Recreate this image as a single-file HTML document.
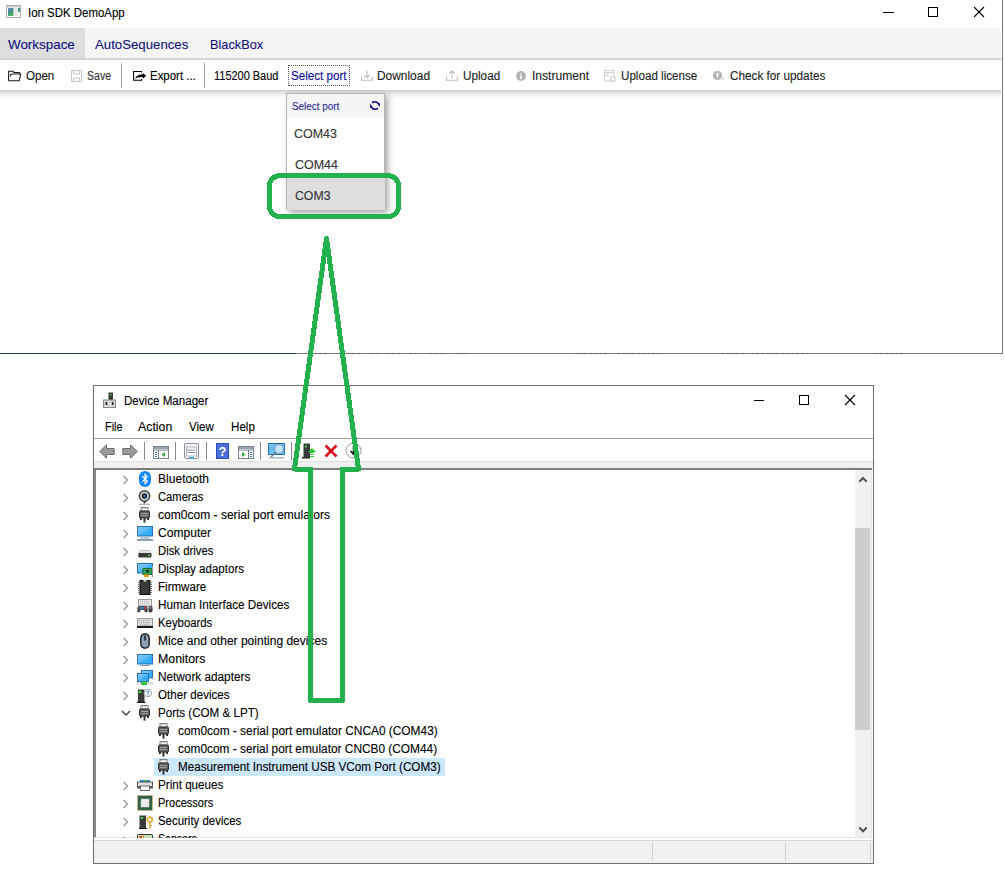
<!DOCTYPE html>
<html><head><meta charset="utf-8"><style>
html,body{margin:0;padding:0;}
body{width:1005px;height:871px;position:relative;overflow:hidden;background:#fff;font-family:"Liberation Sans",sans-serif;}
.t{position:absolute;white-space:nowrap;line-height:normal;transform-origin:0 0;-webkit-text-stroke:0.12px currentColor;}
.r{position:absolute;display:block;}
</style></head><body>
<svg class="r" style="left:6px;top:5px;" width="15" height="13" viewBox="0 0 15 13"><rect x="0.5" y="0.5" width="14" height="12" fill="#fff" stroke="#a9adb2"/><rect x="1" y="1" width="13" height="1.5" fill="#c9cdd2"/><defs><linearGradient id="ig" x1="0" y1="0" x2="0.4" y2="1"><stop offset="0" stop-color="#6a8fc0"/><stop offset="0.5" stop-color="#3d8a8f"/><stop offset="1" stop-color="#52b060"/></linearGradient></defs><rect x="2" y="3" width="5.5" height="8" fill="url(#ig)"/><rect x="8.5" y="3" width="3" height="8" fill="#e3e3e3"/><rect x="12" y="3" width="2" height="4" fill="url(#ig)"/></svg>
<div class="t" style="left:27.80px;top:5.84px;font-size:12px;color:#000;transform:scaleX(0.9538);">Ion SDK DemoApp</div>
<div class="r" style="left:883px;top:12px;width:11px;height:1px;background:#000;"></div>
<div class="r" style="left:928px;top:7px;width:10px;height:10px;background:transparent;border:1px solid #000;box-sizing:border-box;"></div>
<svg class="r" style="left:973px;top:6px;" width="12" height="12" viewBox="0 0 12 12"><path d="M1 1L11 11M11 1L1 11" stroke="#000" stroke-width="1.1"/></svg>
<div class="r" style="left:0px;top:28px;width:1001px;height:30px;background:#f5f5f5;"></div>
<div class="r" style="left:0px;top:28px;width:85px;height:30px;background:#dedede;"></div>
<div class="r" style="left:0px;top:58px;width:1001px;height:2px;background:#d4d4d4;"></div>
<div class="t" style="left:8.40px;top:37.03px;font-size:13px;color:#12127e;transform:scaleX(1.0311);">Workspace</div>
<div class="t" style="left:95.40px;top:37.03px;font-size:13px;color:#12127e;transform:scaleX(1.0164);">AutoSequences</div>
<div class="t" style="left:209.60px;top:37.03px;font-size:13px;color:#12127e;transform:scaleX(0.9818);">BlackBox</div>
<div class="r" style="left:0;top:90px;width:1001px;height:9px;background:linear-gradient(#cacaca,#e4e4e4 30%,#f6f6f6 65%,#fff);"></div>
<div class="r" style="left:121px;top:63px;width:1px;height:25px;background:#a0a0a0;"></div>
<div class="r" style="left:204px;top:63px;width:1px;height:25px;background:#a0a0a0;"></div>
<svg class="r" style="left:8px;top:70px;" width="14" height="12" viewBox="0 0 14 12"><path d="M0.6 11V1.3H5L6 2.5H11.5V3.9M2.3 6.5Q2.3 3.9 4 3.9H12.7L11.3 10.7H0.6" fill="none" stroke="#1a1a1a" stroke-width="1.05"/></svg>
<div class="t" style="left:26.30px;top:69.14px;font-size:12px;color:#111;transform:scaleX(0.9641);">Open</div>
<svg class="r" style="left:71px;top:70px;" width="11" height="12" viewBox="0 0 11 12"><rect x="0.5" y="0.5" width="10" height="11" fill="none" stroke="#c8c8c8"/><rect x="2.5" y="0.5" width="6" height="3.5" fill="none" stroke="#c8c8c8"/><rect x="2.5" y="8" width="6" height="3.5" fill="none" stroke="#c8c8c8"/></svg>
<div class="t" style="left:87.00px;top:69.14px;font-size:12px;color:#333;transform:scaleX(0.8775);">Save</div>
<svg class="r" style="left:133px;top:70px;" width="14" height="12" viewBox="0 0 14 12"><path d="M8.6 2.4V1.4H0.6V10.3H8.6V9.1" fill="none" stroke="#000" stroke-width="1.05"/><path d="M2.2 9C2.8 6.2 5.5 4.4 9.8 4.2V2.9L13.2 5.8L9.8 8.7V7.1C6.2 6.9 3.8 7.6 2.2 9Z" fill="#000"/></svg>
<div class="t" style="left:150.30px;top:69.14px;font-size:12px;color:#000;transform:scaleX(0.9538);">Export ...</div>
<div class="t" style="left:214.00px;top:69.14px;font-size:12px;color:#000;transform:scaleX(0.9134);">115200 Baud</div>
<div class="r" style="left:288px;top:65px;width:62px;height:21px;background:transparent;border:1px dotted #555;box-sizing:border-box;"></div>
<div class="t" style="left:291.30px;top:69.14px;font-size:12px;color:#0c0c98;transform:scaleX(0.9675);">Select port</div>
<svg class="r" style="left:361px;top:70px;" width="12" height="11" viewBox="0 0 12 11"><path d="M6 0.5V7.5M3.3 5L6 7.7L8.7 5M0.5 6.5V10.3H11.3V6.5" fill="none" stroke="#bdbdbd" stroke-width="1.1"/></svg>
<div class="t" style="left:377.40px;top:69.14px;font-size:12px;color:#222;transform:scaleX(0.9932);">Download</div>
<svg class="r" style="left:446px;top:70px;" width="12" height="11" viewBox="0 0 12 11"><path d="M6 8V1M3.3 3.5L6 0.8L8.7 3.5M0.5 6.5V10.3H11.3V6.5" fill="none" stroke="#bdbdbd" stroke-width="1.1"/></svg>
<div class="t" style="left:462.50px;top:69.14px;font-size:12px;color:#222;transform:scaleX(0.9783);">Upload</div>
<svg class="r" style="left:516px;top:71px;" width="10" height="10" viewBox="0 0 10 10"><circle cx="5" cy="5" r="5" fill="#b3b3b3"/><rect x="4.3" y="4" width="1.5" height="4.2" fill="#fff"/><rect x="4.3" y="2" width="1.5" height="1.3" fill="#fff"/></svg>
<div class="t" style="left:531.70px;top:69.14px;font-size:12px;color:#222;transform:scaleX(1.0072);">Instrument</div>
<svg class="r" style="left:604px;top:70px;" width="12" height="12" viewBox="0 0 12 12"><rect x="0.5" y="0.5" width="9.5" height="10.5" fill="none" stroke="#cfcfcf"/><rect x="1" y="2" width="9" height="1.5" fill="#d8d8d8"/><rect x="1" y="5" width="4" height="1.2" fill="#d0d0d0"/><rect x="6.5" y="7" width="4.5" height="4" fill="#fff" stroke="#c8c8c8"/></svg>
<div class="t" style="left:620.60px;top:69.14px;font-size:12px;color:#222;transform:scaleX(0.9694);">Upload license</div>
<svg class="r" style="left:712px;top:70px;" width="13" height="12" viewBox="0 0 13 12"><circle cx="5.5" cy="5.5" r="4.6" fill="#b5b5b5"/><path d="M5.5 2.5L3.5 4.7H4.8V7.5H6.2V4.7H7.5Z" fill="#fff"/><path d="M9.5 10L12 7.5" stroke="#cfcfcf" stroke-width="1.2"/></svg>
<div class="t" style="left:729.70px;top:69.14px;font-size:12px;color:#222;transform:scaleX(0.9786);">Check for updates</div>
<div class="r" style="left:1002px;top:0px;width:1px;height:354px;background:#7a7a7a;"></div>
<div class="r" style="left:0px;top:353px;width:296px;height:1px;background:#1e3d5c;"></div>
<div class="r" style="left:296px;top:353px;width:707px;height:1px;background:#7a7a7a;"></div>
<div class="r" style="left:286px;top:93px;width:99px;height:117px;background:#fff;border:1px solid #b5b5b5;box-sizing:border-box;box-shadow:3px 3px 6px rgba(0,0,0,0.35);"></div>
<div class="r" style="left:287px;top:94px;width:97px;height:23px;background:#f5f5f5;"></div>
<div class="r" style="left:287px;top:178px;width:98px;height:32px;background:#dedede;"></div>
<div class="t" style="left:292.00px;top:101.15px;font-size:10px;color:#2a2a96;transform:scaleX(0.9895);">Select port</div>
<svg class="r" style="left:369px;top:100px;" width="12" height="11" viewBox="0 0 12 11"><path d="M3 2.8A4.3 4 0 0 1 9 3.2" fill="none" stroke="#0c0c88" stroke-width="1.8"/><path d="M7.6 2.6L11.2 3.6L10.6 7.3Z" fill="#0c0c88"/><path d="M9 8.2A4.3 4 0 0 1 3 7.8" fill="none" stroke="#0c0c88" stroke-width="1.8"/><path d="M4.4 8.4L0.8 7.4L1.4 3.7Z" fill="#0c0c88"/></svg>
<div class="t" style="left:294.30px;top:126.84px;font-size:12px;color:#333;transform:scaleX(1.0401);">COM43</div>
<div class="t" style="left:294.60px;top:157.64px;font-size:12px;color:#333;transform:scaleX(1.0401);">COM44</div>
<div class="t" style="left:294.60px;top:188.74px;font-size:12px;color:#333;transform:scaleX(1.0239);">COM3</div>
<div class="r" style="left:93px;top:385px;width:781px;height:479px;background:#fff;border:1px solid #6f6f6f;box-sizing:border-box;"></div>
<svg class="r" style="left:103px;top:392px;" width="13" height="16" viewBox="0 0 13 16"><rect x="5.5" y="0.5" width="4.5" height="8" fill="#3a3a3a"/><rect x="7" y="2" width="1.5" height="1.5" fill="#3ce03c"/><rect x="0.5" y="8" width="12" height="7.5" fill="#d9d9d9" stroke="#8a8a8a"/><rect x="2.5" y="10" width="1.8" height="3" fill="#222"/><rect x="8.7" y="10" width="1.8" height="3" fill="#222"/><rect x="4.5" y="11" width="4" height="1" fill="#f4f4f4"/></svg>
<div class="t" style="left:123.60px;top:394.14px;font-size:12px;color:#000;transform:scaleX(0.9660);">Device Manager</div>
<div class="r" style="left:754px;top:400px;width:10px;height:1px;background:#000;"></div>
<div class="r" style="left:799px;top:395px;width:10px;height:10px;background:transparent;border:1px solid #000;box-sizing:border-box;"></div>
<svg class="r" style="left:844px;top:394px;" width="12" height="12" viewBox="0 0 12 12"><path d="M1 1L11 11M11 1L1 11" stroke="#000" stroke-width="1.1"/></svg>
<div class="t" style="left:104.50px;top:419.94px;font-size:12px;color:#000;transform:scaleX(0.9051);">File</div>
<div class="t" style="left:138.20px;top:419.94px;font-size:12px;color:#000;transform:scaleX(1.0284);">Action</div>
<div class="t" style="left:189.20px;top:419.94px;font-size:12px;color:#000;transform:scaleX(0.9577);">View</div>
<div class="t" style="left:230.60px;top:419.94px;font-size:12px;color:#000;transform:scaleX(0.9685);">Help</div>
<div class="r" style="left:94px;top:438px;width:779px;height:1px;background:#a0a0a0;"></div>
<div class="r" style="left:94px;top:461px;width:779px;height:7px;background:#f0f0f0;"></div>
<div class="r" style="left:94px;top:461px;width:779px;height:1px;background:#dedede;"></div>
<div class="r" style="left:94px;top:468px;width:778px;height:2px;background:#7c7c7c;"></div>
<svg class="r" style="left:99px;top:444px;" width="16" height="15" viewBox="0 0 16 15"><path d="M0.8 7.5L7.5 0.8V4.5H15.2V10.5H7.5V14.2Z" fill="#9a9a9a" stroke="#6e6e6e" stroke-width="1"/></svg>
<svg class="r" style="left:122px;top:444px;" width="16" height="15" viewBox="0 0 16 15"><path d="M15.2 7.5L8.5 0.8V4.5H0.8V10.5H8.5V14.2Z" fill="#9a9a9a" stroke="#6e6e6e" stroke-width="1"/></svg>
<div class="r" style="left:144px;top:442px;width:1px;height:18px;background:#8a8a8a;"></div>
<div class="r" style="left:175px;top:442px;width:1px;height:18px;background:#8a8a8a;"></div>
<div class="r" style="left:206px;top:442px;width:1px;height:18px;background:#8a8a8a;"></div>
<div class="r" style="left:260px;top:442px;width:1px;height:18px;background:#8a8a8a;"></div>
<div class="r" style="left:291px;top:442px;width:1px;height:18px;background:#8a8a8a;"></div>
<svg class="r" style="left:153px;top:446px;" width="16" height="13" viewBox="0 0 16 13"><rect x="0.5" y="0.5" width="15" height="12" fill="#fff" stroke="#7a8290"/><rect x="1" y="1" width="14" height="2" fill="#9aa3b0"/><rect x="1" y="3.5" width="14" height="1" fill="#7a8290"/><rect x="5" y="4" width="1" height="8.5" fill="#7a8290"/><rect x="2" y="6" width="2" height="1" fill="#3a78c8"/><rect x="2" y="8" width="2" height="1" fill="#3a78c8"/><rect x="2" y="10" width="2" height="1" fill="#3a78c8"/><path d="M12 6L8.5 8.5L12 11Z" fill="#2ea43a"/></svg>
<svg class="r" style="left:184px;top:443px;" width="15" height="16" viewBox="0 0 15 16"><rect x="0.5" y="0.5" width="14" height="15" rx="1.5" fill="#f4f4f4" stroke="#8a8f98"/><rect x="2.5" y="4" width="10" height="9" fill="#fff" stroke="#aab0b8"/><rect x="4" y="6.5" width="7" height="1" fill="#8090a0"/><rect x="4" y="9" width="7" height="1" fill="#8090a0"/><rect x="3" y="6.5" width="1" height="1" fill="#2a9ae0"/><rect x="5" y="14" width="5" height="1.5" fill="#2ab0f0"/></svg>
<svg class="r" style="left:216px;top:443px;" width="13" height="16" viewBox="0 0 13 16"><rect x="0" y="0" width="13" height="16" fill="#2b4fb8"/><rect x="1" y="1" width="11" height="14" fill="#4a6fd8"/><text x="6.5" y="13" font-size="13" font-weight="bold" text-anchor="middle" fill="#fff" font-family="Liberation Sans">?</text></svg>
<svg class="r" style="left:238px;top:446px;" width="16" height="13" viewBox="0 0 16 13"><rect x="0.5" y="0.5" width="15" height="12" fill="#fff" stroke="#7a8290"/><rect x="1" y="1" width="14" height="2" fill="#9aa3b0"/><rect x="1" y="3.5" width="14" height="1" fill="#7a8290"/><rect x="10" y="4" width="1" height="8.5" fill="#7a8290"/><rect x="12" y="6" width="2" height="1" fill="#3a78c8"/><rect x="12" y="8" width="2" height="1" fill="#3a78c8"/><rect x="12" y="10" width="2" height="1" fill="#3a78c8"/><path d="M4 6L7.5 8.5L4 11Z" fill="#2ea43a"/></svg>
<svg class="r" style="left:268px;top:443px;" width="18" height="16" viewBox="0 0 18 16"><rect x="0.5" y="0.5" width="16" height="11" fill="#6ec0f0" stroke="#2a70b0"/><circle cx="11" cy="6" r="4.5" fill="#bfe6fa" stroke="#7a9ab0"/><path d="M8 9L3 14" stroke="#6a7a8a" stroke-width="1.5"/><rect x="1" y="14" width="15" height="1.5" fill="#a8b8c8"/></svg>
<svg class="r" style="left:302px;top:443px;" width="14" height="16" viewBox="0 0 14 16"><rect x="1.5" y="0.5" width="6.5" height="14" fill="#3a3a3a"/><rect x="3" y="2.5" width="2" height="2" fill="#3ce03c"/><rect x="0" y="14" width="8" height="1.5" fill="#222"/><path d="M10 5L14 9H11.8V10H8.2V9H6Z" fill="#2ec22e"/><rect x="8.2" y="11" width="3.6" height="1" fill="#2ec22e"/><rect x="8.2" y="13" width="3.6" height="1" fill="#2ec22e"/></svg>
<svg class="r" style="left:324px;top:444px;" width="14" height="14" viewBox="0 0 14 14"><path d="M1.5 1.5L12.5 12.5M12.5 1.5L1.5 12.5" stroke="#e0061e" stroke-width="2.6"/></svg>
<svg class="r" style="left:345px;top:442px;" width="17" height="17" viewBox="0 0 17 17"><circle cx="8.5" cy="8.5" r="7.5" fill="#fff" stroke="#9a9a9a"/><path d="M8.5 4V11M5.5 9L8.5 12L11.5 9" fill="none" stroke="#111" stroke-width="1.6"/></svg>
<div class="r" style="left:94px;top:470px;width:2px;height:369px;background:#888;"></div>
<div class="r" style="left:855px;top:470px;width:16px;height:367px;background:#f0f0f0;"></div>
<div class="r" style="left:855px;top:528px;width:15px;height:202px;background:#cdcdcd;"></div>
<div class="r" style="left:871px;top:470px;width:1px;height:368px;background:#e6e6e6;"></div>
<svg class="r" style="left:858px;top:474px;" width="10" height="10" viewBox="0 0 10 10"><path d="M1.3 7.8L5 4.1L8.7 7.8" fill="none" stroke="#555" stroke-width="2.1"/></svg>
<svg class="r" style="left:858px;top:824px;" width="10" height="10" viewBox="0 0 10 10"><path d="M1.3 3.6L5 7.3L8.7 3.6" fill="none" stroke="#555" stroke-width="2.1"/></svg>
<div class="r" style="left:94px;top:837px;width:777px;height:1px;background:#e3e3e3;"></div>
<div class="r" style="left:94px;top:838px;width:779px;height:2px;background:#fdfdfd;"></div>
<div class="r" style="left:94px;top:840px;width:779px;height:1px;background:#d7d7d7;"></div>
<div class="r" style="left:94px;top:841px;width:779px;height:22px;background:#f0f0f0;"></div>
<div class="r" style="left:652px;top:842px;width:1px;height:19px;background:#d0d0d0;"></div>
<div class="r" style="left:785px;top:842px;width:1px;height:19px;background:#d0d0d0;"></div>
<div class="r" style="left:870px;top:842px;width:1px;height:19px;background:#d0d0d0;"></div>
<svg class="r" style="left:122px;top:475px;" width="8" height="10" viewBox="0 0 8 10"><path d="M1.5 1L5.5 5L1.5 9" fill="none" stroke="#a0a0a0" stroke-width="1.5"/></svg>
<svg class="r" style="left:139px;top:471px;" width="12" height="16" viewBox="0 0 12 16"><rect x="0" y="0" width="12" height="16" rx="6" fill="#1089ff"/><path d="M3.2 5.2L8.4 10.3L6 12.7V3.3L8.4 5.7L3.2 10.8" fill="none" stroke="#fff" stroke-width="1.15"/></svg>
<div class="t" style="left:158.40px;top:471.94px;font-size:12px;color:#000;transform:scaleX(1.0058);">Bluetooth</div>
<svg class="r" style="left:122px;top:493px;" width="8" height="10" viewBox="0 0 8 10"><path d="M1.5 1L5.5 5L1.5 9" fill="none" stroke="#a0a0a0" stroke-width="1.5"/></svg>
<svg class="r" style="left:138px;top:490px;" width="13" height="15" viewBox="0 0 13 15"><circle cx="6.5" cy="6" r="5.2" fill="#cfcfcf" stroke="#464646" stroke-width="1.5"/><circle cx="6.5" cy="6" r="2.7" fill="#1b2436"/><circle cx="6.5" cy="6" r="1.1" fill="#3b7fd4"/><rect x="5.5" y="11.3" width="2" height="2.2" fill="#333"/><rect x="1" y="13.8" width="11" height="1" fill="#a0a0a0"/></svg>
<div class="t" style="left:158.40px;top:489.94px;font-size:12px;color:#000;transform:scaleX(0.9326);">Cameras</div>
<svg class="r" style="left:122px;top:511px;" width="8" height="10" viewBox="0 0 8 10"><path d="M1.5 1L5.5 5L1.5 9" fill="none" stroke="#a0a0a0" stroke-width="1.5"/></svg>
<svg class="r" style="left:139px;top:507px;" width="11" height="16" viewBox="0 0 11 16"><rect x="2" y="0.5" width="7" height="3.5" fill="#fff" stroke="#808080"/><path d="M3.2 1.6H8" stroke="#999" stroke-dasharray="0.8 0.8"/><rect x="0.5" y="4" width="10" height="7" rx="1" fill="#5e5e5e" stroke="#333"/><rect x="2" y="6" width="7" height="0.9" fill="#aaa"/><rect x="2" y="8.2" width="7" height="0.9" fill="#aaa"/><rect x="1" y="11" width="1.8" height="2" fill="#222"/><rect x="8.2" y="11" width="1.8" height="2" fill="#222"/><rect x="4.5" y="11" width="2" height="4.6" fill="#333"/></svg>
<div class="t" style="left:158.40px;top:507.94px;font-size:12px;color:#000;transform:scaleX(1.0036);">com0com - serial port emulators</div>
<svg class="r" style="left:122px;top:529px;" width="8" height="10" viewBox="0 0 8 10"><path d="M1.5 1L5.5 5L1.5 9" fill="none" stroke="#a0a0a0" stroke-width="1.5"/></svg>
<svg class="r" style="left:137px;top:526px;" width="16" height="15" viewBox="0 0 16 15"><defs><linearGradient id="scr" x1="0" y1="0" x2="1" y2="1"><stop offset="0" stop-color="#86cdfb"/><stop offset="0.5" stop-color="#5cbaf8"/><stop offset="0.51" stop-color="#3eaef6"/><stop offset="1" stop-color="#2ea8f4"/></linearGradient></defs><rect x="0.5" y="0.5" width="15" height="9.5" fill="url(#scr)" stroke="#2a72b0"/><rect x="6.5" y="10.5" width="3" height="1" fill="#b8c4d0"/><rect x="3.5" y="11.5" width="9" height="1" fill="#7d90a8"/><rect x="0" y="13" width="16" height="2" fill="#8ea0b5"/></svg>
<div class="t" style="left:158.40px;top:525.94px;font-size:12px;color:#000;transform:scaleX(1.0059);">Computer</div>
<svg class="r" style="left:122px;top:547px;" width="8" height="10" viewBox="0 0 8 10"><path d="M1.5 1L5.5 5L1.5 9" fill="none" stroke="#a0a0a0" stroke-width="1.5"/></svg>
<svg class="r" style="left:138px;top:550px;" width="14" height="8" viewBox="0 0 14 8"><path d="M2 0.5H11.5L13 3.2H0.8Z" fill="#ececec" stroke="#c4c4c4"/><rect x="0.3" y="3" width="13.2" height="4.5" rx="1" fill="#383838"/><rect x="10.3" y="4.5" width="1.6" height="1.6" fill="#45e045"/></svg>
<div class="t" style="left:158.40px;top:543.94px;font-size:12px;color:#000;transform:scaleX(0.9442);">Disk drives</div>
<svg class="r" style="left:122px;top:565px;" width="8" height="10" viewBox="0 0 8 10"><path d="M1.5 1L5.5 5L1.5 9" fill="none" stroke="#a0a0a0" stroke-width="1.5"/></svg>
<svg class="r" style="left:137px;top:563px;" width="16" height="14" viewBox="0 0 16 14"><defs><linearGradient id="scr" x1="0" y1="0" x2="1" y2="1"><stop offset="0" stop-color="#86cdfb"/><stop offset="0.5" stop-color="#5cbaf8"/><stop offset="0.51" stop-color="#3eaef6"/><stop offset="1" stop-color="#2ea8f4"/></linearGradient></defs><rect x="0.5" y="0.5" width="15" height="9.5" fill="url(#scr)" stroke="#2a72b0"/><rect x="6" y="5.5" width="9" height="6" fill="#2ea050" stroke="#1d6e33"/><rect x="9" y="7" width="3" height="2.5" fill="#1a3a22"/><rect x="7" y="11.5" width="5" height="2.5" fill="#f0a020"/><rect x="15" y="3" width="1" height="11" fill="#9a9a9a"/></svg>
<div class="t" style="left:158.40px;top:561.94px;font-size:12px;color:#000;transform:scaleX(0.9622);">Display adaptors</div>
<svg class="r" style="left:122px;top:583px;" width="8" height="10" viewBox="0 0 8 10"><path d="M1.5 1L5.5 5L1.5 9" fill="none" stroke="#a0a0a0" stroke-width="1.5"/></svg>
<svg class="r" style="left:138px;top:580px;" width="14" height="15" viewBox="0 0 14 15"><rect x="2" y="0.5" width="10" height="14" fill="#3a3a3a" stroke="#000"/><path d="M5 0.3Q7 3 9 0.3Z" fill="#fff"/><path d="M1 2V14M13 2V14" stroke="#777" stroke-width="2" stroke-dasharray="1 1"/></svg>
<div class="t" style="left:158.40px;top:579.94px;font-size:12px;color:#000;transform:scaleX(0.9640);">Firmware</div>
<svg class="r" style="left:122px;top:601px;" width="8" height="10" viewBox="0 0 8 10"><path d="M1.5 1L5.5 5L1.5 9" fill="none" stroke="#a0a0a0" stroke-width="1.5"/></svg>
<svg class="r" style="left:137px;top:599px;" width="16" height="14" viewBox="0 0 16 14"><rect x="1.5" y="0.5" width="13" height="6.5" fill="#e6e6e6" stroke="#9a9a9a"/><path d="M3 2.5H13M3 4.5H13" stroke="#b0b0b0" stroke-dasharray="1 1"/><path d="M0.3 13.2V9.2Q0.3 7 2.6 7H8.6Q10.6 7 10.6 9.2V13.2H8L7 11H3.8L2.8 13.2Z" fill="#4e4e4e"/><rect x="3.2" y="7.8" width="3" height="2.5" fill="#2a8ae0"/><circle cx="7.8" cy="9" r="1" fill="#f04020"/><rect x="11.4" y="7" width="4.2" height="6.5" rx="2" fill="#3e3e3e"/><rect x="13" y="8" width="1" height="2" fill="#aaa"/></svg>
<div class="t" style="left:158.40px;top:597.94px;font-size:12px;color:#000;transform:scaleX(0.9753);">Human Interface Devices</div>
<svg class="r" style="left:122px;top:619px;" width="8" height="10" viewBox="0 0 8 10"><path d="M1.5 1L5.5 5L1.5 9" fill="none" stroke="#a0a0a0" stroke-width="1.5"/></svg>
<svg class="r" style="left:137px;top:618px;" width="16" height="10" viewBox="0 0 16 10"><rect x="0.5" y="0.5" width="15" height="7.5" fill="#e2e2e2" stroke="#9a9a9a"/><path d="M2 2.5H14M2 4.5H14M3 6.3H13" stroke="#a8a8a8" stroke-dasharray="1.2 0.8"/><rect x="0" y="8" width="16" height="2" fill="#1a1a1a"/></svg>
<div class="t" style="left:158.40px;top:615.94px;font-size:12px;color:#000;transform:scaleX(0.9465);">Keyboards</div>
<svg class="r" style="left:122px;top:637px;" width="8" height="10" viewBox="0 0 8 10"><path d="M1.5 1L5.5 5L1.5 9" fill="none" stroke="#a0a0a0" stroke-width="1.5"/></svg>
<svg class="r" style="left:139.5px;top:633px;" width="10" height="16" viewBox="0 0 10 16"><rect x="0.8" y="0.8" width="8.4" height="14.4" rx="4.2" fill="#8da0b8" stroke="#111" stroke-width="1.3"/><rect x="4.2" y="2.5" width="1.6" height="5" fill="#222"/></svg>
<div class="t" style="left:158.40px;top:633.94px;font-size:12px;color:#000;transform:scaleX(1.0026);">Mice and other pointing devices</div>
<svg class="r" style="left:122px;top:655px;" width="8" height="10" viewBox="0 0 8 10"><path d="M1.5 1L5.5 5L1.5 9" fill="none" stroke="#a0a0a0" stroke-width="1.5"/></svg>
<svg class="r" style="left:137px;top:654px;" width="16" height="12" viewBox="0 0 16 12"><defs><linearGradient id="scr" x1="0" y1="0" x2="1" y2="1"><stop offset="0" stop-color="#86cdfb"/><stop offset="0.5" stop-color="#5cbaf8"/><stop offset="0.51" stop-color="#3eaef6"/><stop offset="1" stop-color="#2ea8f4"/></linearGradient></defs><rect x="0.5" y="0.5" width="15" height="9.5" fill="url(#scr)" stroke="#2a72b0"/><rect x="6.5" y="10.3" width="3" height="0.8" fill="#b8c4d0"/><rect x="3.5" y="11" width="9" height="1" fill="#7d90a8"/></svg>
<div class="t" style="left:158.40px;top:651.94px;font-size:12px;color:#000;transform:scaleX(1.0279);">Monitors</div>
<svg class="r" style="left:122px;top:673px;" width="8" height="10" viewBox="0 0 8 10"><path d="M1.5 1L5.5 5L1.5 9" fill="none" stroke="#a0a0a0" stroke-width="1.5"/></svg>
<svg class="r" style="left:137px;top:670px;" width="16" height="15" viewBox="0 0 16 15"><defs><linearGradient id="scr" x1="0" y1="0" x2="1" y2="1"><stop offset="0" stop-color="#86cdfb"/><stop offset="0.5" stop-color="#5cbaf8"/><stop offset="0.51" stop-color="#3eaef6"/><stop offset="1" stop-color="#2ea8f4"/></linearGradient></defs><rect x="4.5" y="0.5" width="11" height="7.5" fill="url(#scr)" stroke="#2a72b0"/><rect x="0.5" y="3.5" width="11" height="8" fill="url(#scr)" stroke="#2a72b0"/><rect x="0" y="12.2" width="16" height="2.3" fill="#d8d8d8"/><rect x="4" y="11.5" width="6" height="3.5" fill="#3cc03c"/></svg>
<div class="t" style="left:158.40px;top:669.94px;font-size:12px;color:#000;transform:scaleX(0.9815);">Network adapters</div>
<svg class="r" style="left:122px;top:691px;" width="8" height="10" viewBox="0 0 8 10"><path d="M1.5 1L5.5 5L1.5 9" fill="none" stroke="#a0a0a0" stroke-width="1.5"/></svg>
<svg class="r" style="left:137px;top:689px;" width="15" height="14" viewBox="0 0 15 14"><rect x="1" y="0.5" width="6.5" height="12.5" fill="#3a3a3a"/><rect x="1.8" y="2" width="2.5" height="2" fill="#3ce03c"/><rect x="0" y="12.8" width="8.5" height="1.2" fill="#111"/><circle cx="10.8" cy="4" r="3.8" fill="#fff" stroke="#a0a0a0"/><path d="M9.6 3.2Q9.6 2 10.8 2Q12 2 12 3.1Q12 3.9 10.9 4.4V5.2" fill="none" stroke="#1a6ad0" stroke-width="0.9"/><rect x="10.4" y="5.8" width="1" height="0.9" fill="#1a6ad0"/></svg>
<div class="t" style="left:158.40px;top:687.94px;font-size:12px;color:#000;transform:scaleX(0.9671);">Other devices</div>
<svg class="r" style="left:121px;top:710px;" width="10" height="7" viewBox="0 0 10 7"><path d="M1 1L5 5L9 1" fill="none" stroke="#444" stroke-width="1.5"/></svg>
<svg class="r" style="left:139px;top:705px;" width="11" height="16" viewBox="0 0 11 16"><rect x="2" y="0.5" width="7" height="3.5" fill="#fff" stroke="#808080"/><path d="M3.2 1.6H8" stroke="#999" stroke-dasharray="0.8 0.8"/><rect x="0.5" y="4" width="10" height="7" rx="1" fill="#5e5e5e" stroke="#333"/><rect x="2" y="6" width="7" height="0.9" fill="#aaa"/><rect x="2" y="8.2" width="7" height="0.9" fill="#aaa"/><rect x="1" y="11" width="1.8" height="2" fill="#222"/><rect x="8.2" y="11" width="1.8" height="2" fill="#222"/><rect x="4.5" y="11" width="2" height="4.6" fill="#333"/></svg>
<div class="t" style="left:158.40px;top:705.94px;font-size:12px;color:#000;transform:scaleX(0.9672);">Ports (COM &amp; LPT)</div>
<svg class="r" style="left:158px;top:723px;" width="11" height="16" viewBox="0 0 11 16"><rect x="2" y="0.5" width="7" height="3.5" fill="#fff" stroke="#808080"/><path d="M3.2 1.6H8" stroke="#999" stroke-dasharray="0.8 0.8"/><rect x="0.5" y="4" width="10" height="7" rx="1" fill="#5e5e5e" stroke="#333"/><rect x="2" y="6" width="7" height="0.9" fill="#aaa"/><rect x="2" y="8.2" width="7" height="0.9" fill="#aaa"/><rect x="1" y="11" width="1.8" height="2" fill="#222"/><rect x="8.2" y="11" width="1.8" height="2" fill="#222"/><rect x="4.5" y="11" width="2" height="4.6" fill="#333"/></svg>
<div class="t" style="left:177.50px;top:723.94px;font-size:12px;color:#000;transform:scaleX(0.9910);">com0com - serial port emulator CNCA0 (COM43)</div>
<svg class="r" style="left:158px;top:741px;" width="11" height="16" viewBox="0 0 11 16"><rect x="2" y="0.5" width="7" height="3.5" fill="#fff" stroke="#808080"/><path d="M3.2 1.6H8" stroke="#999" stroke-dasharray="0.8 0.8"/><rect x="0.5" y="4" width="10" height="7" rx="1" fill="#5e5e5e" stroke="#333"/><rect x="2" y="6" width="7" height="0.9" fill="#aaa"/><rect x="2" y="8.2" width="7" height="0.9" fill="#aaa"/><rect x="1" y="11" width="1.8" height="2" fill="#222"/><rect x="8.2" y="11" width="1.8" height="2" fill="#222"/><rect x="4.5" y="11" width="2" height="4.6" fill="#333"/></svg>
<div class="t" style="left:177.50px;top:741.94px;font-size:12px;color:#000;transform:scaleX(0.9887);">com0com - serial port emulator CNCB0 (COM44)</div>
<div class="r" style="left:154px;top:758px;width:291px;height:18px;background:#cce8ff;"></div>
<svg class="r" style="left:158px;top:759px;" width="11" height="16" viewBox="0 0 11 16"><rect x="2" y="0.5" width="7" height="3.5" fill="#fff" stroke="#808080"/><path d="M3.2 1.6H8" stroke="#999" stroke-dasharray="0.8 0.8"/><rect x="0.5" y="4" width="10" height="7" rx="1" fill="#5e5e5e" stroke="#333"/><rect x="2" y="6" width="7" height="0.9" fill="#aaa"/><rect x="2" y="8.2" width="7" height="0.9" fill="#aaa"/><rect x="1" y="11" width="1.8" height="2" fill="#222"/><rect x="8.2" y="11" width="1.8" height="2" fill="#222"/><rect x="4.5" y="11" width="2" height="4.6" fill="#333"/></svg>
<div class="t" style="left:177.50px;top:759.94px;font-size:12px;color:#000;transform:scaleX(0.9747);">Measurement Instrument USB VCom Port (COM3)</div>
<svg class="r" style="left:122px;top:781px;" width="8" height="10" viewBox="0 0 8 10"><path d="M1.5 1L5.5 5L1.5 9" fill="none" stroke="#a0a0a0" stroke-width="1.5"/></svg>
<svg class="r" style="left:137px;top:780px;" width="16" height="11" viewBox="0 0 16 11"><rect x="3" y="0" width="10" height="2.5" fill="#2a8ae0"/><rect x="7" y="0" width="2.5" height="2.5" fill="#3cc03c"/><rect x="0.5" y="2" width="15" height="6" fill="#e0e0e0" stroke="#555"/><rect x="0.5" y="6" width="2.5" height="2" fill="#555"/><rect x="13" y="6" width="2.5" height="2" fill="#555"/><rect x="3.5" y="6" width="9" height="4.5" fill="#fff" stroke="#666"/></svg>
<div class="t" style="left:158.40px;top:777.94px;font-size:12px;color:#000;transform:scaleX(0.9692);">Print queues</div>
<svg class="r" style="left:122px;top:799px;" width="8" height="10" viewBox="0 0 8 10"><path d="M1.5 1L5.5 5L1.5 9" fill="none" stroke="#a0a0a0" stroke-width="1.5"/></svg>
<svg class="r" style="left:137px;top:795px;" width="16" height="16" viewBox="0 0 16 16"><rect x="0.5" y="0.5" width="15" height="15" fill="none" stroke="#dba940" stroke-dasharray="1 1"/><rect x="1.2" y="1.2" width="13.6" height="13.6" fill="#2f6446" stroke="#1e4a32" stroke-width="0.8"/><rect x="4" y="4" width="8" height="8" fill="#ebebeb" stroke="#c8c8c8" stroke-width="0.6"/></svg>
<div class="t" style="left:158.40px;top:795.94px;font-size:12px;color:#000;transform:scaleX(0.9197);">Processors</div>
<svg class="r" style="left:122px;top:817px;" width="8" height="10" viewBox="0 0 8 10"><path d="M1.5 1L5.5 5L1.5 9" fill="none" stroke="#a0a0a0" stroke-width="1.5"/></svg>
<svg class="r" style="left:139px;top:815px;" width="14" height="14" viewBox="0 0 14 14"><rect x="0.5" y="0.5" width="6.5" height="12.5" fill="#3a3a3a"/><rect x="1.8" y="2" width="2.2" height="2" fill="#3ce03c"/><rect x="0" y="13" width="8" height="1" fill="#111"/><circle cx="10.8" cy="4.6" r="2.5" fill="#fff" stroke="#e0a830" stroke-width="1.7"/><rect x="10.1" y="6.8" width="1.5" height="7" fill="#e0a830"/><rect x="11.5" y="10.3" width="1.5" height="1.1" fill="#e0a830"/></svg>
<div class="t" style="left:158.40px;top:813.94px;font-size:12px;color:#000;transform:scaleX(0.9523);">Security devices</div>
<div class="r" style="left:96px;top:830px;width:759px;height:8px;overflow:hidden;"><svg style="position:absolute;left:41px;top:4px" width="16" height="10"><rect x="0.5" y="0.5" width="15" height="9" rx="1" fill="#c8e0b0" stroke="#333"/><rect x="2.5" y="2" width="2.5" height="3" fill="#e03030"/><rect x="6" y="1" width="1" height="6" fill="#e0a830"/></svg><svg style="position:absolute;left:26px;top:6px" width="8" height="10"><path d="M1.5 1L5.5 5L1.5 9" fill="none" stroke="#a0a0a0" stroke-width="1.5"/></svg><div class="t" style="left:62.4px;top:1.9px;font-size:12px;transform:scaleX(0.88);">Sensors</div></div>
<div class="r" style="left:315px;top:353px;width:15px;height:1px;background:repeating-linear-gradient(90deg,#5a5a5a 0 2px,#8a8a8a 2px 3px,#707070 3px 5px);"></div>
<div class="r" style="left:338px;top:353px;width:22px;height:1px;background:repeating-linear-gradient(90deg,#5a5a5a 0 2px,#8a8a8a 2px 3px,#707070 3px 5px);"></div>
<div class="r" style="left:372px;top:353px;width:8px;height:1px;background:repeating-linear-gradient(90deg,#5a5a5a 0 2px,#8a8a8a 2px 3px,#707070 3px 5px);"></div>
<div class="r" style="left:388px;top:353px;width:12px;height:1px;background:repeating-linear-gradient(90deg,#5a5a5a 0 2px,#8a8a8a 2px 3px,#707070 3px 5px);"></div>
<div class="r" style="left:410px;top:353px;width:10px;height:1px;background:repeating-linear-gradient(90deg,#5a5a5a 0 2px,#8a8a8a 2px 3px,#707070 3px 5px);"></div>
<div class="r" style="left:430px;top:353px;width:15px;height:1px;background:repeating-linear-gradient(90deg,#5a5a5a 0 2px,#8a8a8a 2px 3px,#707070 3px 5px);"></div>
<div class="r" style="left:455px;top:353px;width:15px;height:1px;background:repeating-linear-gradient(90deg,#5a5a5a 0 2px,#8a8a8a 2px 3px,#707070 3px 5px);"></div>
<div class="r" style="left:575px;top:353px;width:35px;height:1px;background:repeating-linear-gradient(90deg,#5a5a5a 0 2px,#8a8a8a 2px 3px,#707070 3px 5px);"></div>
<div class="r" style="left:618px;top:353px;width:42px;height:1px;background:repeating-linear-gradient(90deg,#5a5a5a 0 2px,#8a8a8a 2px 3px,#707070 3px 5px);"></div>
<div class="r" style="left:722px;top:353px;width:23px;height:1px;background:repeating-linear-gradient(90deg,#5a5a5a 0 2px,#8a8a8a 2px 3px,#707070 3px 5px);"></div>
<div class="r" style="left:752px;top:353px;width:58px;height:1px;background:repeating-linear-gradient(90deg,#5a5a5a 0 2px,#8a8a8a 2px 3px,#707070 3px 5px);"></div>
<div class="r" style="left:876px;top:353px;width:29px;height:1px;background:repeating-linear-gradient(90deg,#5a5a5a 0 2px,#8a8a8a 2px 3px,#707070 3px 5px);"></div>
<svg class="r" style="left:0;top:0;z-index:50" width="1005" height="871" viewBox="0 0 1005 871" shape-rendering="crispEdges"><path d="M326.5 238.5L294.5 469H310.5V700.5H342.5V469H358.5Z" fill="none" stroke="#22b14c" stroke-width="5" stroke-linejoin="round"/><rect x="269.5" y="175.8" width="129" height="40.7" rx="10" ry="10" fill="none" stroke="#22b14c" stroke-width="5"/></svg>
</body></html>
